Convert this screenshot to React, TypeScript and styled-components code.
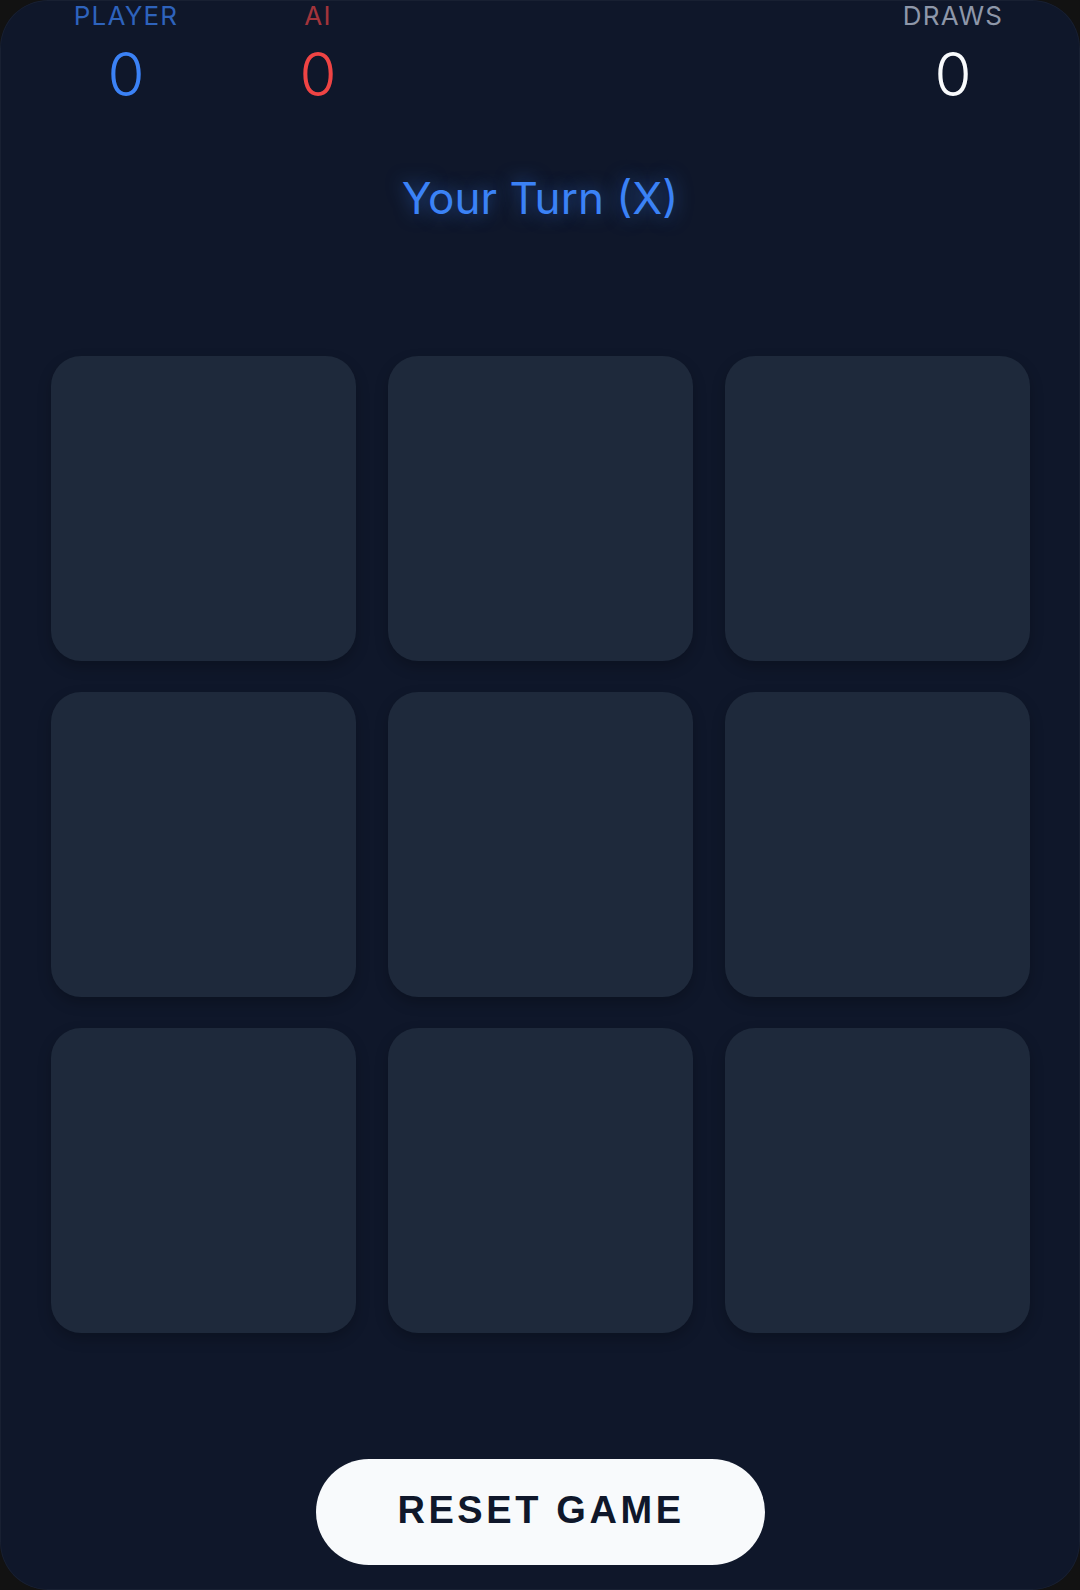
import React from "react";
import styled, { createGlobalStyle } from "styled-components";

const GlobalStyle = createGlobalStyle`
  * { box-sizing: border-box; }
  html, body { margin: 0; padding: 0; background: #121212; }
  body { font-family: Inter, "Noto Sans", sans-serif; }
`;

const Card = styled.div`
  width: 1080px;
  height: 1590px;
  background: #0f172a;
  border-radius: 48px;
  box-shadow: inset 0 0 0 1px rgba(255, 255, 255, 0.04);
  display: flex;
  flex-direction: column;
  align-items: stretch;
  overflow: hidden;
`;

const ScoreBoard = styled.div`
  display: flex;
  align-items: flex-start;
  padding: 0 67px 0 66px;
  gap: 72px;
`;

const ScoreItem = styled.div<{ $push?: boolean }>`
  width: 120px;
  display: flex;
  flex-direction: column;
  align-items: center;
  margin-left: ${(p) => (p.$push ? "auto" : "0")};
`;

const ScoreLabel = styled.div<{ $color: string }>`
  margin-top: 0;
  font-size: 26px;
  line-height: 1.21;
  font-weight: 400;
  letter-spacing: 1.2px;
  color: ${(p) => p.$color};
  text-transform: uppercase;
`;

const ScoreValue = styled.div<{ $color: string }>`
  margin-top: 7px;
  font-size: 60px;
  line-height: 1.21;
  font-weight: 300;
  color: ${(p) => p.$color};
`;

const Turn = styled.div`
  margin-top: 61px;
  text-align: center;
  font-size: 44px;
  line-height: 1.21;
  font-weight: 400;
  color: #3b82f6;
  text-shadow: 0 0 18px rgba(59, 130, 246, 0.55);
`;

const Board = styled.div`
  margin-top: 131px;
  padding: 0 50px 0 51px;
  display: grid;
  grid-template-columns: repeat(3, 305px);
  grid-auto-rows: 305px;
  gap: 31px 32px;
`;

const Cell = styled.button`
  border: none;
  padding: 0;
  background: #1e293b;
  border-radius: 30px;
  box-shadow: 0 6px 14px rgba(0, 0, 0, 0.22);
  cursor: pointer;
`;

const Footer = styled.div`
  margin-top: 126px;
  display: flex;
  justify-content: center;
`;

const ResetButton = styled.button`
  width: 449px;
  height: 106px;
  border: none;
  border-radius: 53px;
  background: #f8fafc;
  color: #0f172a;
  font-family: "Liberation Sans", Arial, sans-serif;
  font-weight: 700;
  font-size: 38px;
  letter-spacing: 3.6px;
  padding: 0 0 4px 2px;
  cursor: pointer;
`;

export default function App() {
  return (
    <>
      <GlobalStyle />
      <Card>
        <ScoreBoard>
          <ScoreItem>
            <ScoreLabel $color="rgba(59,130,246,0.72)">Player</ScoreLabel>
            <ScoreValue $color="#3b82f6">0</ScoreValue>
          </ScoreItem>
          <ScoreItem>
            <ScoreLabel $color="rgba(239,68,68,0.68)">AI</ScoreLabel>
            <ScoreValue $color="#ef4444">0</ScoreValue>
          </ScoreItem>
          <ScoreItem $push>
            <ScoreLabel $color="#8e97a9">Draws</ScoreLabel>
            <ScoreValue $color="#f8fafc">0</ScoreValue>
          </ScoreItem>
        </ScoreBoard>
        <Turn>Your Turn (X)</Turn>
        <Board>
          {Array.from({ length: 9 }).map((_, i) => (
            <Cell key={i} aria-label={`cell ${i + 1}`} />
          ))}
        </Board>
        <Footer>
          <ResetButton>RESET GAME</ResetButton>
        </Footer>
      </Card>
    </>
  );
}
